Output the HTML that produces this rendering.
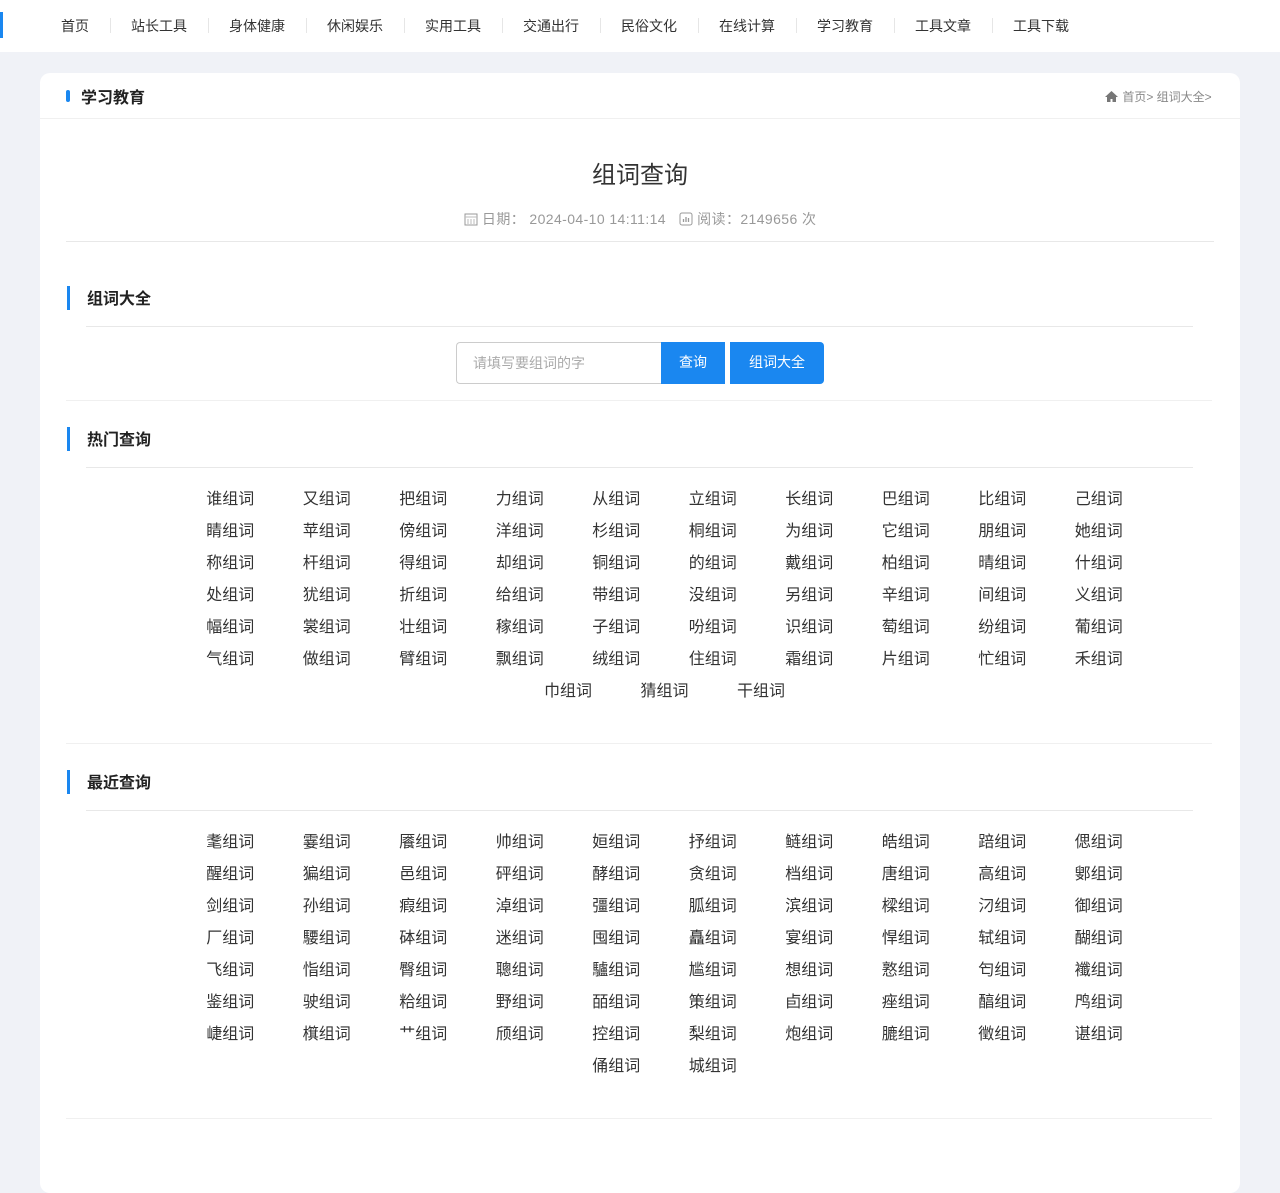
<!DOCTYPE html>
<html><head><meta charset="utf-8">
<style>
*{margin:0;padding:0;box-sizing:border-box}
body{width:1280px;height:1167px;background:#f0f2f7;font-family:"Liberation Sans","Noto Sans CJK SC",sans-serif;color:#333;position:relative;overflow:hidden}
.nav{position:absolute;left:0;top:0;width:1280px;height:52px;background:#fff}
.nav .bar{position:absolute;left:0;top:12px;width:3px;height:26px;background:#1a87f0}
.nav span{position:absolute;top:17px;font-size:14px;color:#333;line-height:18px}
.nav i{position:absolute;top:18px;width:1px;height:15px;background:#e6e6e6}
.card{position:absolute;left:40px;top:73px;width:1200px;height:1120px;background:#fff;border-radius:10px}
.abs{position:absolute}
.hl{position:absolute;height:1px;background:#e8e8e8}
.sec{position:absolute;left:87px;font-size:16px;font-weight:bold;color:#222}
.sbar{position:absolute;left:67px;width:3px;height:24px;background:#1a87f0}
.grid{position:absolute;left:182px;width:965px;text-align:center;font-size:16px;line-height:32px;color:#333}
.grid span{display:inline-block;width:96.5px;text-align:center}
</style></head><body>
<div class="nav"><div class="bar"></div>
<span style="left:61px">首页</span><i style="left:110px"></i>
<span style="left:131px">站长工具</span><i style="left:208px"></i>
<span style="left:229px">身体健康</span><i style="left:306px"></i>
<span style="left:327px">休闲娱乐</span><i style="left:404px"></i>
<span style="left:425px">实用工具</span><i style="left:502px"></i>
<span style="left:523px">交通出行</span><i style="left:600px"></i>
<span style="left:621px">民俗文化</span><i style="left:698px"></i>
<span style="left:719px">在线计算</span><i style="left:796px"></i>
<span style="left:817px">学习教育</span><i style="left:894px"></i>
<span style="left:915px">工具文章</span><i style="left:992px"></i>
<span style="left:1013px">工具下载</span>
</div>
<div class="card"></div>
<div class="abs" style="left:66px;top:90px;width:4px;height:12px;border-radius:2px;background:#1a87f0"></div>
<div class="abs" style="left:81px;top:84px;font-size:16px;font-weight:bold;color:#222">学习教育</div>
<div class="abs" style="left:1104px;top:88px;font-size:12px;color:#888"><svg width="15" height="13" viewBox="0 0 15 13" style="vertical-align:-2px"><path d="M7.5 1L1 7h2v5h3.5V9h2v3H12V7h2z" fill="#777"/></svg> 首页&gt; 组词大全&gt;</div>
<div class="hl" style="left:40px;top:118px;width:1200px;background:#f0f0f0"></div>
<div class="abs" style="left:0;width:1280px;top:155px;text-align:center;font-size:24px;color:#333">组词查询</div>
<div class="abs" style="left:0;width:1280px;top:209px;text-align:center;font-size:14px;color:#999;letter-spacing:0.4px">
<svg width="14" height="14" viewBox="0 0 14 14" style="vertical-align:-2px"><rect x="1" y="2" width="12" height="11" fill="none" stroke="#999"/><path d="M1 5h12M4 7v5M7 7v5M10 7v5" stroke="#bbb"/></svg> 日期： 2024-04-10 14:11:14 &nbsp;
<svg width="14" height="14" viewBox="0 0 14 14" style="vertical-align:-2px"><rect x="1" y="1" width="12" height="12" rx="2" fill="none" stroke="#999"/><path d="M4.5 10V7M7 10V5M9.5 10V6" stroke="#999" stroke-width="1.3"/></svg> 阅读：2149656 次</div>
<div class="hl" style="left:66px;top:241px;width:1148px"></div>

<div class="sbar" style="top:286px"></div><div class="sec" style="top:285px">组词大全</div>
<div class="hl" style="left:86px;top:326px;width:1107px"></div>
<div class="abs" style="left:456px;top:342px;width:206px;height:42px;border:1px solid #ccc;border-right:none;border-radius:4px 0 0 4px;font-size:14px;color:#aaa;padding:10px 0 0 16px">请填写要组词的字</div>
<div class="abs" style="left:661px;top:342px;width:64px;height:42px;background:#1a87f0;color:#fff;font-size:14px;text-align:center;line-height:40px">查询</div>
<div class="abs" style="left:730px;top:342px;width:94px;height:42px;background:#1a87f0;color:#fff;font-size:14px;text-align:center;line-height:40px;border-radius:0 4px 4px 0">组词大全</div>
<div class="hl" style="left:66px;top:400px;width:1146px;background:#f0f0f0"></div>

<div class="sbar" style="top:427px"></div><div class="sec" style="top:426px">热门查询</div>
<div class="hl" style="left:86px;top:467px;width:1107px"></div>
<div class="grid" style="top:484px">
<span>谁组词</span><span>又组词</span><span>把组词</span><span>力组词</span><span>从组词</span><span>立组词</span><span>长组词</span><span>巴组词</span><span>比组词</span><span>己组词</span><span>睛组词</span><span>苹组词</span><span>傍组词</span><span>洋组词</span><span>杉组词</span><span>桐组词</span><span>为组词</span><span>它组词</span><span>朋组词</span><span>她组词</span><span>称组词</span><span>杆组词</span><span>得组词</span><span>却组词</span><span>铜组词</span><span>的组词</span><span>戴组词</span><span>柏组词</span><span>晴组词</span><span>什组词</span><span>处组词</span><span>犹组词</span><span>折组词</span><span>给组词</span><span>带组词</span><span>没组词</span><span>另组词</span><span>辛组词</span><span>间组词</span><span>义组词</span><span>幅组词</span><span>裳组词</span><span>壮组词</span><span>稼组词</span><span>子组词</span><span>吩组词</span><span>识组词</span><span>萄组词</span><span>纷组词</span><span>葡组词</span><span>气组词</span><span>做组词</span><span>臂组词</span><span>飘组词</span><span>绒组词</span><span>住组词</span><span>霜组词</span><span>片组词</span><span>忙组词</span><span>禾组词</span><span>巾组词</span><span>猜组词</span><span>干组词</span>
</div>
<div class="hl" style="left:66px;top:743px;width:1146px;background:#f0f0f0"></div>

<div class="sbar" style="top:770px"></div><div class="sec" style="top:769px">最近查询</div>
<div class="hl" style="left:86px;top:810px;width:1107px"></div>
<div class="grid" style="top:827px">
<span>耄组词</span><span>霎组词</span><span>餍组词</span><span>帅组词</span><span>姮组词</span><span>抒组词</span><span>鲢组词</span><span>皓组词</span><span>踣组词</span><span>偲组词</span><span>醒组词</span><span>猵组词</span><span>邑组词</span><span>砰组词</span><span>酵组词</span><span>贪组词</span><span>档组词</span><span>唐组词</span><span>高组词</span><span>鄋组词</span><span>剑组词</span><span>孙组词</span><span>瘕组词</span><span>淖组词</span><span>彊组词</span><span>胍组词</span><span>滨组词</span><span>樑组词</span><span>汈组词</span><span>御组词</span><span>厂组词</span><span>騕组词</span><span>砵组词</span><span>迷组词</span><span>囤组词</span><span>矗组词</span><span>宴组词</span><span>悍组词</span><span>轼组词</span><span>醐组词</span><span>飞组词</span><span>恉组词</span><span>臀组词</span><span>聰组词</span><span>驢组词</span><span>尴组词</span><span>想组词</span><span>憝组词</span><span>匄组词</span><span>襳组词</span><span>鉴组词</span><span>驶组词</span><span>粭组词</span><span>野组词</span><span>皕组词</span><span>策组词</span><span>卣组词</span><span>痤组词</span><span>醕组词</span><span>鸤组词</span><span>崨组词</span><span>檱组词</span><span>艹组词</span><span>颀组词</span><span>控组词</span><span>梨组词</span><span>炮组词</span><span>膔组词</span><span>徵组词</span><span>谌组词</span><span>俑组词</span><span>城组词</span>
</div>
<div class="hl" style="left:66px;top:1118px;width:1146px;background:#f0f0f0"></div>
</body></html>
